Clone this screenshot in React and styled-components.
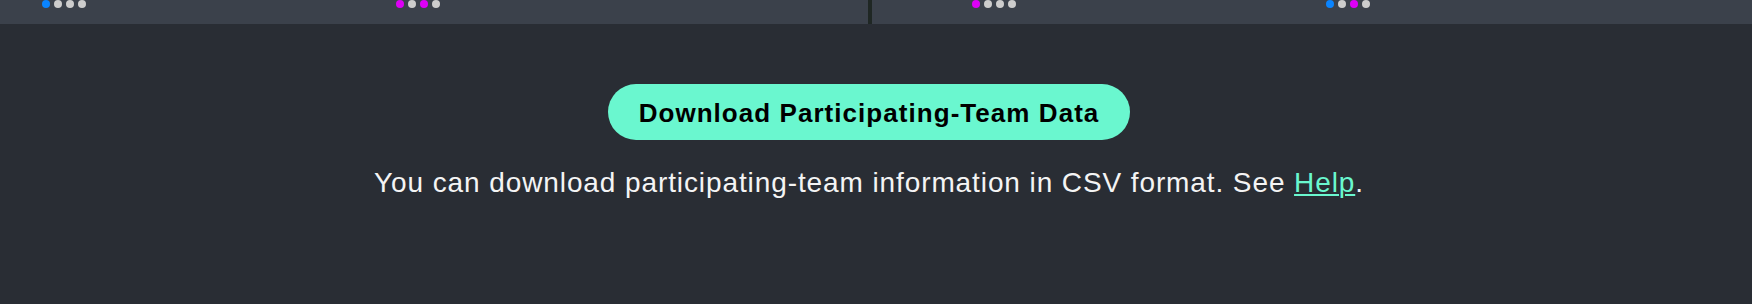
import React from "react";
import styled, { createGlobalStyle } from "styled-components";

const GlobalStyle = createGlobalStyle`
  html, body {
    margin: 0;
    padding: 0;
    background: #292d34;
  }
  body {
    font-family: "Liberation Sans", Arial, sans-serif;
    color: #f4f4f4;
  }
`;

const Page = styled.div`
  width: 100%;
  min-height: 304px;
  background: #292d34;
  display: flex;
  flex-direction: column;
`;

const Strip = styled.div`
  height: 24px;
  display: flex;
  background: #3b414b;
`;

const Panel = styled.div`
  display: flex;
  align-items: flex-start;
  gap: 310px;
  padding-left: ${(p) => p.$offset}px;
  width: ${(p) => (p.$width ? `${p.$width}px` : "auto")};
  flex: ${(p) => (p.$width ? "none" : "1")};
  box-sizing: border-box;
`;

const Divider = styled.div`
  width: 4px;
  height: 24px;
  background: #1f2724;
`;

const DotGroup = styled.div`
  display: flex;
  gap: 4px;
`;

const Dot = styled.span`
  width: 8px;
  height: 8px;
  border-radius: 50%;
  background: ${(p) => p.$color};
`;

const Content = styled.section`
  display: flex;
  flex-direction: column;
  align-items: center;
  padding: 60px 14px 0 0;
`;

const DownloadButton = styled.button`
  height: 56px;
  padding: 0 31px;
  border: none;
  border-radius: 28px;
  background: #6af7cf;
  color: #000;
  font-family: "Liberation Sans", Arial, sans-serif;
  font-weight: 700;
  font-size: 26px;
  letter-spacing: 1.05px;
  line-height: 58px;
  cursor: pointer;
`;

const Note = styled.p`
  margin: 22px 0 0;
  font-size: 28px;
  line-height: 42px;
  letter-spacing: 0.9px;
  color: #f4f4f4;
`;

const HelpLink = styled.a`
  color: #6af7cf;
  text-decoration: underline;
  text-decoration-thickness: 2px;
  text-underline-offset: 2px;
`;

const C = { b: "#0a84ff", m: "#dd00f5", g: "#cdcdcd" };

const groups = {
  left: [
    [C.b, C.g, C.g, C.g],
    [C.m, C.g, C.m, C.g],
  ],
  right: [
    [C.m, C.g, C.g, C.g],
    [C.b, C.g, C.m, C.g],
  ],
};

const Dots = ({ colors }) => (
  <DotGroup>
    {colors.map((c, i) => (
      <Dot key={i} $color={c} />
    ))}
  </DotGroup>
);

export default function App() {
  return (
    <>
      <GlobalStyle />
      <Page>
        <Strip>
          <Panel $width={868} $offset={42}>
            {groups.left.map((g, i) => (
              <Dots key={i} colors={g} />
            ))}
          </Panel>
          <Divider />
          <Panel $offset={100}>
            {groups.right.map((g, i) => (
              <Dots key={i} colors={g} />
            ))}
          </Panel>
        </Strip>
        <Content>
          <DownloadButton>Download Participating-Team Data</DownloadButton>
          <Note>
            You can download participating-team information in CSV format. See{" "}
            <HelpLink href="#">Help</HelpLink>.
          </Note>
        </Content>
      </Page>
    </>
  );
}
